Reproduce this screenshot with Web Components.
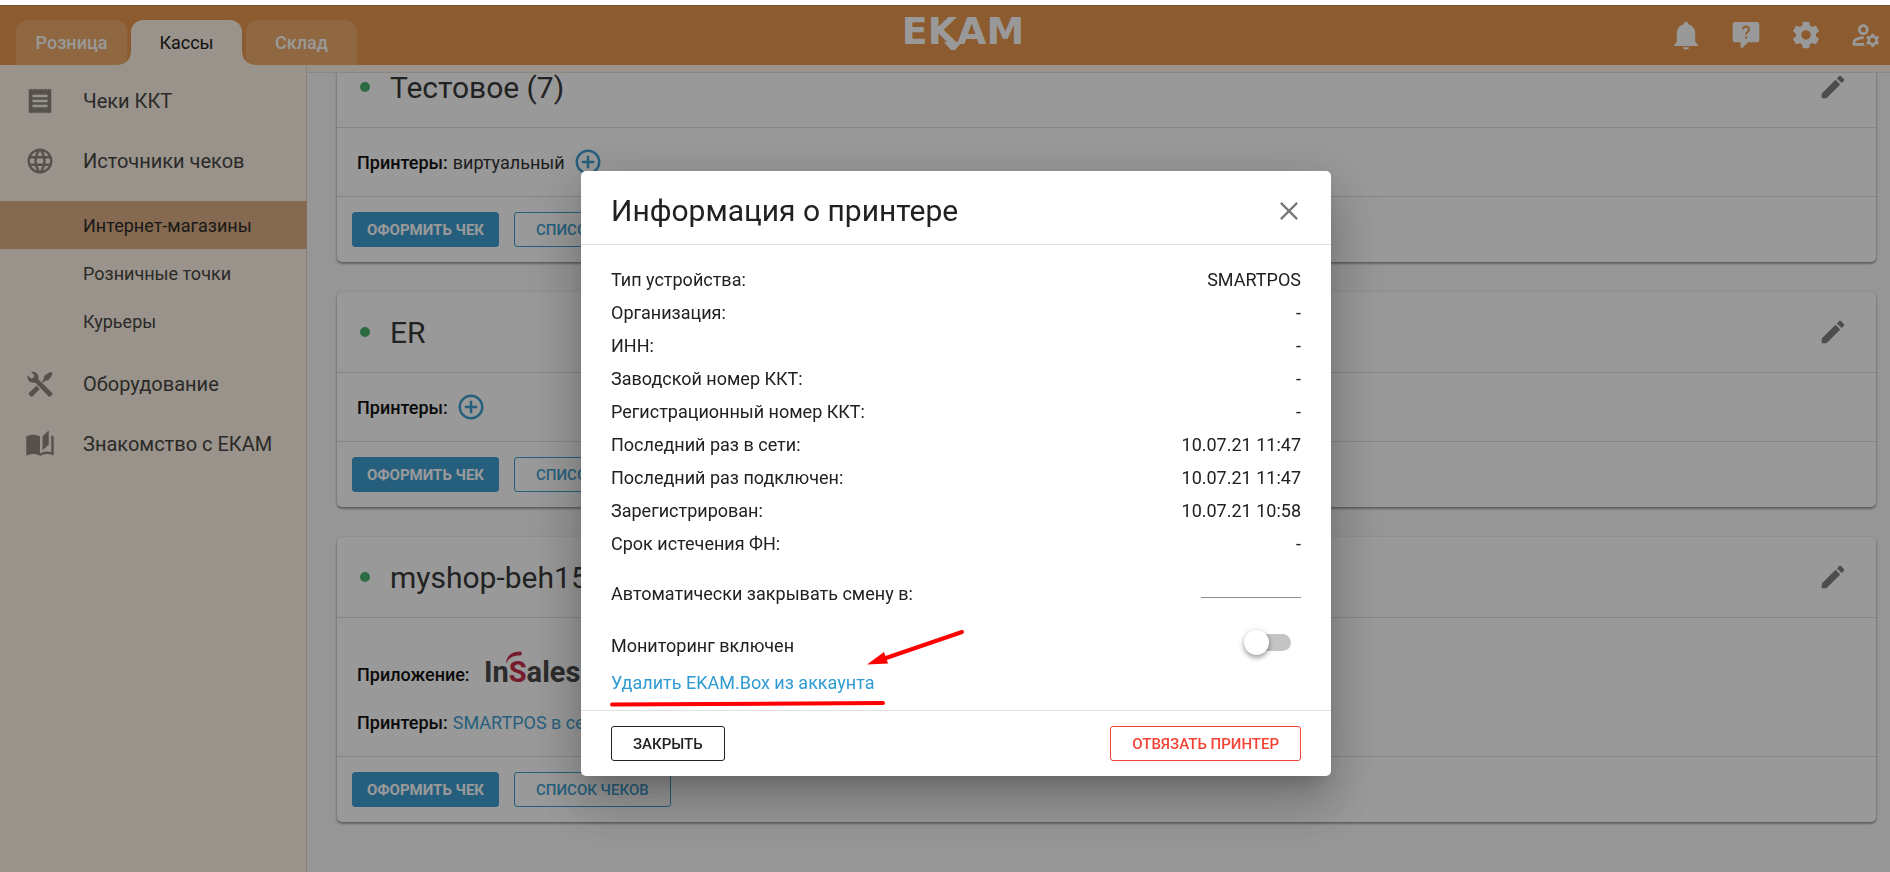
<!DOCTYPE html>
<html lang="ru">
<head>
<meta charset="utf-8">
<title>ЕКАМ</title>
<style>
    html, body {
        height: 100%;
        margin: 0;
    }
    body {
        box-sizing: border-box;
        padding-top: 5px;
        background: #fff;
        font-family: Roboto, "Noto Sans", sans-serif;
        --blue: #3f9fd1;
        --cream: #fff5e8;
        --orange: #e99950;
        --line: #e0e0e0;
    }
</style>
</head>
<body>
<ekam-app>
    <app-header slot="header">
        <app-tab>Розница</app-tab>
        <app-tab active>Кассы</app-tab>
        <app-tab>Склад</app-tab>
    </app-header>

    <side-menu slot="menu">
        <menu-item icon="receipt">Чеки ККТ</menu-item>
        <menu-item icon="globe">Источники чеков</menu-item>
        <sub-menu>
            <menu-item sub active>Интернет-магазины</menu-item>
            <menu-item sub>Розничные точки</menu-item>
            <menu-item sub>Курьеры</menu-item>
        </sub-menu>
        <menu-item icon="tools">Оборудование</menu-item>
        <menu-item icon="book">Знакомство с ЕКАМ</menu-item>
    </side-menu>

    <shop-card name="Тестовое (7)">
        <info-line label="Принтеры:" add>виртуальный</info-line>
    </shop-card>
    <shop-card name="ER">
        <info-line label="Принтеры:" add></info-line>
    </shop-card>
    <shop-card name="myshop-beh15">
        <info-line label="Приложение:" spaced><insales-logo></insales-logo></info-line>
        <info-line label="Принтеры:" link="SMARTPOS в сети"></info-line>
    </shop-card>

    <printer-dialog slot="dialog" heading="Информация о принтере">
        <info-row label="Тип устройства:">SMARTPOS</info-row>
        <info-row label="Организация:">-</info-row>
        <info-row label="ИНН:">-</info-row>
        <info-row label="Заводской номер ККТ:">-</info-row>
        <info-row label="Регистрационный номер ККТ:">-</info-row>
        <info-row label="Последний раз в сети:">10.07.21 11:47</info-row>
        <info-row label="Последний раз подключен:">10.07.21 11:47</info-row>
        <info-row label="Зарегистрирован:">10.07.21 10:58</info-row>
        <info-row label="Срок истечения ФН:">-</info-row>
    </printer-dialog>
</ekam-app>

<script>
const ICONS = {
    receipt: '<path d="M18 17H6v-2h12v2zm0-4H6v-2h12v2zm0-4H6V7h12v2zM3 22l1-1 1 1 1-1 1 1 1-1 1 1 1-1 1 1 1-1 1 1 1-1 1 1 1-1 1 1 1-1 1 1 1-1 1 1V2l-1 1-1-1-1 1-1-1-1 1-1-1-1 1-1-1-1 1-1-1-1 1-1-1-1 1-1-1-1 1-1-1-1 1-1-1v20z"/>',
    globe: '<path d="M11.99 2C6.47 2 2 6.48 2 12s4.47 10 9.99 10C17.52 22 22 17.52 22 12S17.52 2 11.99 2zm6.93 6h-2.95c-.32-1.25-.78-2.45-1.38-3.56 1.84.63 3.37 1.91 4.33 3.56zM12 4.04c.83 1.2 1.48 2.53 1.91 3.96h-3.82c.43-1.43 1.08-2.76 1.91-3.96zM4.26 14C4.1 13.36 4 12.69 4 12s.1-1.36.26-2h3.38c-.08.66-.14 1.32-.14 2 0 .68.06 1.34.14 2H4.26zm.82 2h2.95c.32 1.25.78 2.45 1.38 3.56-1.84-.63-3.37-1.9-4.33-3.56zm2.95-8H5.08c.96-1.66 2.49-2.93 4.33-3.56C8.81 5.55 8.35 6.75 8.03 8zM12 19.96c-.83-1.2-1.48-2.53-1.91-3.96h3.82c-.43 1.43-1.08 2.76-1.91 3.96zM14.34 14H9.66c-.09-.66-.16-1.32-.16-2 0-.68.07-1.35.16-2h4.68c.09.65.16 1.32.16 2 0 .68-.07 1.34-.16 2zm.25 5.56c.6-1.11 1.06-2.31 1.38-3.56h2.95c-.96 1.65-2.49 2.93-4.33 3.56zM16.36 14c.08-.66.14-1.32.14-2 0-.68-.06-1.34-.14-2h3.38c.16.64.26 1.31.26 2s-.1 1.36-.26 2h-3.38z"/>',
    tools: '<path d="M10.6 8.2l11.2 10.9c.4.4.4.8 0 1.2l-1.6 1.6c-.4.4-.8.4-1.2 0L8.1 10.7c-1.8.6-3.7.2-4.9-1.1C2 8.4 1.7 6.6 2.2 5l2.6 2.5 2-.6.6-2L4.9 2.4c1.6-.5 3.4-.1 4.6 1.100 1.2 1.2 1.6 3.1 1.100 4.700z"/><path d="M9.1 13.3l2.7 2.7-5.900 5.900c-.4.4-.8.4-1.200 0l-1.600-1.600c-.4-.4-.4-.8 0-1.200zM14.600 8.700l.9-3.300 3.700-2.700L20.700 2.300 22 3.600l-.5 1.500-2.700 3.700-3.200.9-1.200 1.200-1-1z"/>',
    book: '<path d="M19 1l-5 5v11l5-4.500V1zM1 6v14.650c0 .25.25.5.5.5.1 0 .15-.05.25-.05C3.100 20.450 5.050 20 6.500 20c1.950 0 4.050.4 5.500 1.500V6c-1.450-1.100-3.550-1.500-5.500-1.500S2.450 4.900 1 6zm22 13.500V6c-.6-.45-1.250-.75-2-1v13.500c-1.100-.35-2.300-.5-3.500-.5-1.700 0-4.150.65-5.500 1.500v2c1.350-.85 3.800-1.500 5.500-1.500 1.650 0 3.350.3 4.750 1.050.1.050.15.050.25.050.25 0 .5-.25.5-.5v-1.100z"/>',
    pencil: '<path d="M3 17.250V21h3.750L17.810 9.940l-3.750-3.750L3 17.250zM20.710 7.040c.39-.39.39-1.020 0-1.410l-2.340-2.340c-.39-.39-1.020-.39-1.410 0l-1.830 1.830 3.750 3.750 1.830-1.830z"/>',
    plus: '<path d="M13 7h-2v4H7v2h4v4h2v-4h4v-2h-4V7zm-1-5C6.490 2 2 6.490 2 12s4.490 10 10 10 10-4.490 10-10S17.510 2 12 2zm0 18c-4.410 0-8-3.590-8-8s3.590-8 8-8 8 3.590 8 8-3.590 8-8 8z"/>',
    close: '<path d="M5.500 5.500l13 13M18.500 5.500l-13 13" fill="none" stroke="currentColor" stroke-width="1.700"/>',
    gear: '<path d="M19.430 12.980c.04-.32.07-.64.07-.98s-.03-.66-.07-.98l2.110-1.650c.19-.15.24-.42.12-.64l-2-3.460c-.12-.22-.39-.3-.61-.22l-2.490 1c-.52-.4-1.080-.73-1.690-.98l-.38-2.650C14.460 2.180 14.250 2 14 2h-4c-.25 0-.46.18-.49.42l-.38 2.650c-.61.25-1.170.59-1.690.98l-2.490-1c-.23-.09-.49 0-.61.22l-2 3.460c-.13.22-.07.49.12.64l2.110 1.650c-.04.32-.07.65-.07.98s.03.66.07.98l-2.110 1.650c-.19.15-.24.42-.12.64l2 3.460c.12.22.39.3.61.22l2.490-1c.52.4 1.080.73 1.690.98l.38 2.650c.03.24.24.42.49.42h4c.25 0 .46-.18.49-.42l.38-2.650c.61-.25 1.170-.59 1.690-.98l2.490 1c.23.09.49 0 .61-.22l2-3.460c.12-.22.07-.49-.12-.64l-2.110-1.650zM12 15.500c-1.930 0-3.500-1.570-3.500-3.500s1.570-3.500 3.500-3.500 3.500 1.570 3.500 3.500-1.570 3.500-3.500 3.500z"/>',
    bell: '<path d="M12 2a1.600 1.600 0 0 1 1.600 1.600v.4c3.400.8 5.300 3.500 5.300 6.800v6.500l2.100 2.200v.8H3v-.8l2.100-2.200v-6.500c0-3.300 1.900-6 5.300-6.800v-.4A1.600 1.600 0 0 1 12 2zM9.700 21.200h4.600a2.300 1.700 0 0 1-4.600 0z"/>',
    chat: '<path d="M4 2.300h16a2 2 0 0 1 2 2v11.200a2 2 0 0 1-2 2h-6.500L9.200 21.800a.8.8 0 0 1-1.200-.6v-3.700H4a2 2 0 0 1-2-2V4.300a2 2 0 0 1 2-2z"/><path d="M9.800 7.800a2.200 2.200 0 1 1 3.600 1.700c-.9.7-1.400 1.100-1.400 2.200M12 13.100v1.700" fill="none" stroke="var(--orange)" stroke-width="1.500"/>',
    account: '<path d="M4 18v-.65c0-.34.16-.66.41-.81C6.100 15.530 8.030 15 10 15c.03 0 .05 0 .08.010.1-.7.3-1.370.59-1.980-.22-.02-.44-.03-.67-.03-2.420 0-4.680.67-6.610 1.820-.88.52-1.390 1.500-1.390 2.530V20h9.260c-.42-.6-.75-1.280-.97-2H4zM10 12c2.210 0 4-1.790 4-4s-1.790-4-4-4-4 1.790-4 4 1.790 4 4 4zm0-6c1.100 0 2 .9 2 2s-.9 2-2 2-2-.9-2-2 .9-2 2-2zM20.750 16c0-.22-.03-.42-.06-.63l1.140-1.010-1-1.730-1.450.49c-.32-.27-.68-.48-1.080-.63L18 11h-2l-.3 1.490c-.4.15-.76.36-1.080.63l-1.450-.49-1 1.730 1.140 1.010c-.03.21-.06.41-.06.63s.03.42.06.63l-1.140 1.010 1 1.730 1.450-.49c.32.27.68.48 1.080.63L16 21h2l.3-1.490c.4-.15.76-.36 1.080-.63l1.450.49 1-1.730-1.140-1.010c.03-.21.06-.41.06-.63zM17 18c-1.100 0-2-.9-2-2s.9-2 2-2 2 .9 2 2-.9 2-2 2z"/>'
};

function icon(name, size = 30) {
    return `<svg width="${size}" height="${size}" viewBox="0 0 24 24" fill="currentColor" aria-hidden="true">${ICONS[name]}</svg>`;
}

class BaseElement extends HTMLElement {
    constructor() {
        super();
        this.attachShadow({ mode: 'open' });
    }

    connectedCallback() {
        this.shadowRoot.innerHTML = this.template();
    }
}

class EkamApp extends BaseElement {
    connectedCallback() {
        super.connectedCallback();
        // the list is opened at its end
        requestAnimationFrame(() => this.scrollToEnd());
        window.addEventListener('load', () => this.scrollToEnd());
    }

    scrollToEnd() {
        const list = this.shadowRoot.querySelector('main');
        list.scrollTop = list.scrollHeight;
    }

    template() {
        return `
            <style>
                :host {
                    position: relative;
                    display: flex;
                    flex-direction: column;
                    height: 100%;
                    background: var(--cream);
                    overflow: hidden;
                }
                .body {
                    display: flex;
                    flex: 1;
                    min-height: 0;
                }
                main {
                    box-sizing: border-box;
                    display: flex;
                    flex-direction: column;
                    gap: 30px;
                    flex: 1;
                    margin-top: 7px;
                    padding: 30px 14px 50px 30px;
                    border-top: 1px solid #ebe3d2;
                    background: #fafafa;
                    overflow-y: scroll;
                    scrollbar-width: none;
                }
            </style>
            <slot name="header"></slot>
            <div class="body">
                <slot name="menu"></slot>
                <main><slot></slot></main>
            </div>
            <slot name="dialog"></slot>
        `;
    }
}

class AppHeader extends BaseElement {
    template() {
        return `
            <style>
                :host {
                    display: grid;
                    grid-template-columns: 1fr auto 1fr;
                    flex: none;
                    height: 60px;
                    box-sizing: border-box;
                    padding: 0 8px 0 16px;
                    border-top: 1px solid #d48b48;
                    background: var(--orange);
                    color: #fff;
                }
                nav {
                    display: flex;
                    align-items: flex-end;
                    gap: 4px;
                }
                .logo {
                    padding: 7px 0 0 28px;
                }
                .logo svg {
                    display: block;
                }
                .actions {
                    display: flex;
                    justify-content: flex-end;
                    gap: 28px;
                    padding-top: 13px;
                }
                button {
                    width: 32px;
                    height: 32px;
                    padding: 0;
                    border: none;
                    background: none;
                    color: inherit;
                }
                button svg {
                    display: block;
                }
            </style>
            <nav><slot></slot></nav>
            <div class="logo">
                <svg width="140" height="46" viewBox="0 0 140 46" fill="currentColor">
                    <text x="70" y="31" text-anchor="middle" font-family="DejaVu Sans, sans-serif" font-size="38" font-weight="bold">EKAM</text>
                    <path d="M51 29h18l-7 8h-4z"/>
                </svg>
            </div>
            <div class="actions">
                <button type="button" aria-label="Уведомления">${icon('bell', 32)}</button>
                <button type="button" aria-label="Помощь">${icon('chat', 32)}</button>
                <button type="button" aria-label="Настройки">${icon('gear', 32)}</button>
                <button type="button" aria-label="Аккаунт">${icon('account', 32)}</button>
            </div>
        `;
    }
}

class AppTab extends BaseElement {
    template() {
        return `
            <style>
                :host {
                    position: relative;
                    display: block;
                }
                :host([active]) {
                    z-index: 1;
                }
                a {
                    display: flex;
                    align-items: center;
                    justify-content: center;
                    width: 111px;
                    height: 45px;
                    border-radius: 12px 12px 0 0;
                    background: #eeac6b;
                    color: #fff;
                    font-size: 18px;
                    font-weight: 500;
                    text-decoration: none;
                }
                :host([active]) a {
                    background: var(--cream);
                    color: #222;
                    font-weight: 400;
                }
                /* flares that join the open tab with the page below */
                :host([active])::before,
                :host([active])::after {
                    content: "";
                    position: absolute;
                    bottom: 0;
                    width: 12px;
                    height: 12px;
                }
                :host([active])::before {
                    right: 100%;
                    background: radial-gradient(circle at 0 0, transparent 11px, var(--cream) 12px);
                }
                :host([active])::after {
                    left: 100%;
                    background: radial-gradient(circle at 100% 0, transparent 11px, var(--cream) 12px);
                }
            </style>
            <a href="#"><slot></slot></a>
        `;
    }
}

class SideMenu extends BaseElement {
    template() {
        return `
            <style>
                :host {
                    display: block;
                    box-sizing: border-box;
                    flex: none;
                    width: 307px;
                    padding-top: 6px;
                    box-shadow: inset -1px 0 #e0d8cb;
                }
            </style>
            <nav><slot></slot></nav>
        `;
    }
}

class SubMenu extends BaseElement {
    template() {
        return `
            <style>
                :host {
                    display: block;
                    padding: 10px 0 9px;
                }
            </style>
            <slot></slot>
        `;
    }
}

class MenuItem extends BaseElement {
    template() {
        const name = this.getAttribute('icon');
        return `
            <style>
                :host {
                    display: block;
                }
                a {
                    display: flex;
                    align-items: center;
                    gap: 28px;
                    height: 60px;
                    padding-left: 25px;
                    color: #484643;
                    font-size: 20px;
                    text-decoration: none;
                }
                svg {
                    color: #8f8880;
                }
                :host([sub]) a {
                    height: 48px;
                    padding-left: 83px;
                    font-size: 18px;
                }
                :host([active]) a {
                    background: #deb187;
                    color: #2c2b29;
                }
            </style>
            <a href="#">${name ? icon(name) : ''}<slot></slot></a>
        `;
    }
}

class ShopCard extends BaseElement {
    template() {
        return `
            <style>
                :host {
                    display: block;
                    flex: none;
                    border-radius: 5px;
                    background: #fff;
                    box-shadow: 0 1px 3px rgba(0, 0, 0, .3), 0 2px 2px rgba(0, 0, 0, .2);
                }
                header {
                    display: flex;
                    align-items: center;
                    height: 80px;
                    padding: 0 28px 0 23px;
                    border-bottom: 1px solid var(--line);
                }
                .dot {
                    width: 10px;
                    height: 10px;
                    border-radius: 50%;
                    background: #4bb271;
                }
                h2 {
                    flex: 1;
                    margin: 0 0 0 20px;
                    color: #3a3a3a;
                    font-size: 30px;
                    font-weight: 400;
                }
                .edit {
                    padding: 0;
                    border: none;
                    background: none;
                    color: #808080;
                }
                .edit svg {
                    display: block;
                }
                .info {
                    display: flex;
                    flex-direction: column;
                    padding: 10px 20px;
                }
                footer {
                    display: flex;
                    gap: 15px;
                    padding: 15px;
                    border-top: 1px solid var(--line);
                }
                footer button {
                    height: 35px;
                    padding: 0 14px;
                    border: 1px solid var(--blue);
                    border-radius: 3px;
                    background: var(--blue);
                    color: #fff;
                    font: 700 15px Roboto, "Noto Sans", sans-serif;
                }
                footer .outline {
                    padding: 0 21px;
                    background: none;
                    color: var(--blue);
                    font-weight: 500;
                }
            </style>
            <header>
                <span class="dot"></span>
                <h2>${this.getAttribute('name')}</h2>
                <button class="edit" type="button" aria-label="Изменить">${icon('pencil')}</button>
            </header>
            <div class="info"><slot></slot></div>
            <footer>
                <button type="button">ОФОРМИТЬ ЧЕК</button>
                <button class="outline" type="button">СПИСОК ЧЕКОВ</button>
            </footer>
        `;
    }
}

class InfoLine extends BaseElement {
    template() {
        const link = this.getAttribute('link');
        const empty = !link && !this.childNodes.length;
        return `
            <style>
                :host {
                    display: flex;
                    align-items: center;
                    min-height: 48px;
                    color: #333;
                    font-size: 18px;
                }
                :host([spaced]) {
                    padding-top: 22px;
                }
                b {
                    margin-right: 5px;
                    color: #111;
                    font-weight: 500;
                }
                b.empty {
                    margin-right: 0;
                }
                a {
                    color: var(--blue);
                    text-decoration: none;
                }
                button {
                    margin-left: 8px;
                    padding: 0;
                    border: none;
                    background: none;
                    color: var(--blue);
                }
                svg {
                    display: block;
                }
            </style>
            <b class="${empty ? 'empty' : ''}">${this.getAttribute('label')}</b>
            <slot></slot>
            ${link ? `<a href="#">${link}</a>` : ''}
            ${this.hasAttribute('add') ? `<button type="button" aria-label="Добавить">${icon('plus')}</button>` : ''}
        `;
    }
}

class InsalesLogo extends BaseElement {
    template() {
        return `
            <style>
                :host {
                    display: block;
                    padding-left: 9px;
                }
                svg {
                    display: block;
                }
            </style>
            <svg width="100" height="48" viewBox="0 0 100 48">
                <text x="0" y="32" font-family="Roboto, sans-serif" font-size="29" font-weight="700" fill="#4a4a4a">In<tspan fill="#c5304a">S</tspan>ales</text>
                <path d="M22 14C22 6 28 1.500 36 1.500c2.500 0 2.500 4 0 4C29 5.500 24 8 22 14z" fill="#c5304a"/>
            </svg>
        `;
    }
}

class PrinterDialog extends BaseElement {
    template() {
        return `
            <style>
                :host {
                    position: absolute;
                    inset: 0;
                    z-index: 10;
                    display: flex;
                    align-items: flex-start;
                    justify-content: center;
                    padding: 166px 0 0 22px;
                    background: rgba(0, 0, 0, .4);
                }
                .dialog {
                    position: relative;
                    width: 750px;
                    border-radius: 5px;
                    background: #fff;
                    color: #212121;
                    font-size: 18px;
                    box-shadow: 0 14px 19px -9px rgba(0, 0, 0, .2), 0 30px 48px 4px rgba(0, 0, 0, .14), 0 11px 58px 10px rgba(0, 0, 0, .12);
                }
                header {
                    display: flex;
                    align-items: center;
                    justify-content: space-between;
                    box-sizing: border-box;
                    height: 74px;
                    padding: 6px 27px 0 30px;
                    border-bottom: 1px solid var(--line);
                }
                h1 {
                    margin: 0;
                    font-size: 30px;
                    font-weight: 400;
                }
                .close {
                    padding: 0;
                    border: none;
                    background: none;
                    color: #757575;
                }
                .close svg {
                    display: block;
                }
                .content {
                    padding: 18px 30px 15px;
                }
                .rows {
                    padding-bottom: 7px;
                }
                .field {
                    display: flex;
                    align-items: center;
                    justify-content: space-between;
                    height: 52px;
                }
                input[type="text"] {
                    box-sizing: border-box;
                    width: 100px;
                    height: 24px;
                    margin: 0 0 14px;
                    padding: 0;
                    border: none;
                    border-bottom: 1px solid #8c8c8c;
                    outline: none;
                    background: none;
                    font: inherit;
                }
                .switch {
                    display: flex;
                    align-items: center;
                    appearance: none;
                    width: 44px;
                    height: 17px;
                    margin: 0 10px 6px 0;
                    border-radius: 9px;
                    background: #c4c4c4;
                }
                .switch::before {
                    content: "";
                    flex: none;
                    width: 25px;
                    height: 25px;
                    margin-left: -3px;
                    border-radius: 50%;
                    background: #fff;
                    box-shadow: 0 3px 5px rgba(0, 0, 0, .3), 0 1px 6px rgba(0, 0, 0, .14);
                }
                .switch:checked::before {
                    margin-left: 22px;
                }
                .remove {
                    display: block;
                    line-height: 24px;
                    color: #2f9bd2;
                    text-decoration: none;
                }
                footer {
                    display: flex;
                    justify-content: space-between;
                    padding: 15px 30px;
                    border-top: 1px solid var(--line);
                }
                footer button {
                    height: 35px;
                    padding: 0 21px;
                    border: 1px solid #212121;
                    border-radius: 3px;
                    background: none;
                    color: #212121;
                    font: 500 15px Roboto, "Noto Sans", sans-serif;
                }
                footer .danger {
                    border-color: #f44336;
                    color: #f44336;
                }
                /* red marker drawn over the removal link */
                .marker {
                    position: absolute;
                    left: 20px;
                    bottom: 60px;
                    pointer-events: none;
                }
            </style>
            <div class="dialog" role="dialog" aria-labelledby="heading">
                <header>
                    <h1 id="heading">${this.getAttribute('heading')}</h1>
                    <button class="close" type="button" aria-label="Закрыть">${icon('close')}</button>
                </header>
                <div class="content">
                    <div class="rows"><slot></slot></div>
                    <div class="field">
                        <label for="close-time">Автоматически закрывать смену в:</label>
                        <input type="text" id="close-time">
                    </div>
                    <div class="field">
                        <label for="monitoring">Мониторинг включен</label>
                        <input class="switch" type="checkbox" id="monitoring">
                    </div>
                    <a class="remove" href="#">Удалить EKAM.Box из аккаунта</a>
                </div>
                <footer>
                    <button type="button">ЗАКРЫТЬ</button>
                    <button class="danger" type="button">ОТВЯЗАТЬ ПРИНТЕР</button>
                </footer>
                <svg class="marker" width="380" height="100" viewBox="0 0 380 100" fill="none" stroke="#f00" stroke-width="4" stroke-linecap="round" aria-hidden="true">
                    <path d="M11 88.500L282 87"/>
                    <path d="M361 16L285 42"/>
                    <path d="M266 48.500l17-12.500 4 11.500z" fill="#f00" stroke="none"/>
                </svg>
            </div>
        `;
    }
}

class InfoRow extends BaseElement {
    template() {
        return `
            <style>
                :host {
                    display: flex;
                    justify-content: space-between;
                    line-height: 33px;
                }
            </style>
            <span>${this.getAttribute('label')}</span>
            <span><slot></slot></span>
        `;
    }
}

customElements.define('ekam-app', EkamApp);
customElements.define('app-header', AppHeader);
customElements.define('app-tab', AppTab);
customElements.define('side-menu', SideMenu);
customElements.define('sub-menu', SubMenu);
customElements.define('menu-item', MenuItem);
customElements.define('shop-card', ShopCard);
customElements.define('info-line', InfoLine);
customElements.define('insales-logo', InsalesLogo);
customElements.define('printer-dialog', PrinterDialog);
customElements.define('info-row', InfoRow);
</script>
</body>
</html>
